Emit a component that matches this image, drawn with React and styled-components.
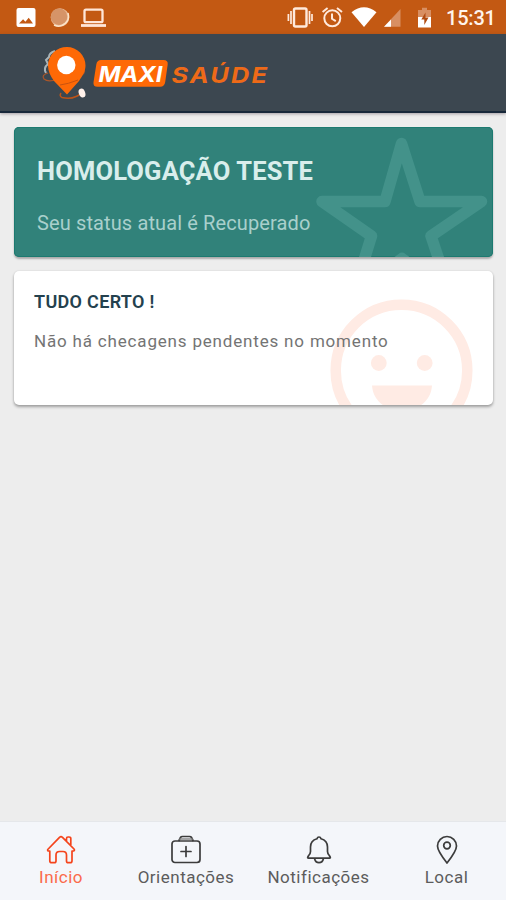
import React from 'react';
import styled, { createGlobalStyle } from 'styled-components';

const GlobalStyle = createGlobalStyle`
  * {
    box-sizing: border-box;
  }

  body {
    margin: 0;
    background-color: #ededed;
    font-family: Roboto, sans-serif;
  }
`;

const Screen = styled.div`
  display: flex;
  flex-direction: column;
  width: 506px;
  height: 900px;
  overflow: hidden;
  background-color: #ededed;
`;

const StatusBar = styled.div`
  display: flex;
  justify-content: space-between;
  height: 34px;
  flex-shrink: 0;
  background-color: #c35913;
`;

const StatusGroup = styled.div`
  display: flex;
  align-items: center;
`;

const Clock = styled.span`
  width: 60px;
  padding: 2px 0 0 0;
  color: #fff4ec;
  font-size: 20px;
  font-weight: 500;
  line-height: 32px;
  letter-spacing: -0.2px;
`;

const Header = styled.header`
  height: 79px;
  flex-shrink: 0;
  padding-left: 38px;
  background-color: #3c4750;
  border-bottom: 2px solid #18283a;
  box-shadow: 0 1px 3px rgba(70, 60, 70, 0.45);
`;

const Content = styled.main`
  display: flex;
  flex-direction: column;
  gap: 14px;
  flex: 1;
  padding: 14px 13px 0 14px;
`;

const Card = styled.section`
  position: relative;
  height: ${(props) => props.$height}px;
  overflow: hidden;
  border-radius: 5px;
  background-color: ${(props) => props.$background};
  box-shadow: 0 2px 3px rgba(0, 0, 0, 0.32), 0 0 2px rgba(0, 0, 0, 0.1);
`;

const StatusCard = styled(Card)`
  padding: 29px 23px 0;
  box-shadow: inset 0 0 0 1px #1c7a70, 0 2px 2px rgba(0, 0, 0, 0.28);
`;

const CheckCard = styled(Card)`
  padding: 20px 20px 0;
`;

const Watermark = styled.svg`
  position: absolute;
  top: 0;
  right: 0;
`;

const UserName = styled.h1`
  position: relative;
  margin: 0;
  color: #d9eeec;
  font-size: 25.5px;
  font-weight: 700;
  line-height: 30px;
  letter-spacing: 0.17px;
`;

const UserStatus = styled.p`
  position: relative;
  margin: 25px 0 0;
  color: #a9d0cc;
  font-size: 20px;
  line-height: 24px;
  letter-spacing: 0.12px;
`;

const CheckTitle = styled.h2`
  position: relative;
  margin: 0;
  color: #24414e;
  font-size: 18px;
  font-weight: 600;
  line-height: 22px;
  letter-spacing: 0.32px;
`;

const CheckText = styled.p`
  position: relative;
  margin: 17px 0 0;
  color: #747474;
  font-size: 17px;
  line-height: 22px;
  letter-spacing: 0.82px;
`;

const TabBar = styled.nav`
  display: grid;
  grid-template-columns: 122px 128px 137px 119px;
  height: 79px;
  flex-shrink: 0;
  border-top: 1px solid #e5e7ea;
  background-color: #f4f6fa;
`;

const Tab = styled.a`
  display: flex;
  flex-direction: column;
  align-items: center;
  padding-top: 13px;
  color: ${(props) => (props.$active ? '#f4441c' : '#3c3c3c')};
`;

const TabLabel = styled.span`
  margin-top: 1px;
  color: ${(props) => (props.$active ? '#fb6b4b' : '#5c5c5c')};
  font-size: 17px;
  line-height: 22px;
  letter-spacing: 0.5px;
`;

const NotificationIcons = () => (
  <svg width="120" height="34" viewBox="0 0 120 34">
    <path
      fill="#fff"
      fillRule="evenodd"
      d="M18.5 8h15a2 2 0 0 1 2 2v15a2 2 0 0 1-2 2h-15a2 2 0 0 1-2-2V10a2 2 0 0 1 2-2zM19 23.500h14l-4.300-5.800-3.300 4.100-2.300-2.600z"
    />
    <circle cx="60" cy="17.500" r="9.300" fill="#e9b894" />
    <circle cx="59" cy="16.700" r="8.300" fill="#d69468" />
    <path d="M54 25a10 10 0 0 0 14-12" fill="none" stroke="#fbe3c8" strokeWidth="1.500" />
    <g fill="none" stroke="#ffe6d8">
      <rect x="84.500" y="9.700" width="18" height="12.500" rx="1.500" strokeWidth="2.300" />
      <path d="M81 25.500h25" strokeWidth="2.800" />
    </g>
  </svg>
);

const SystemIcons = () => (
  <svg width="164" height="34" viewBox="282 0 164 34">
    {/* vibrate */}
    <g fill="none" stroke="#ffe9dc">
      <rect x="294" y="8.500" width="12.500" height="18" rx="1.500" strokeWidth="2.400" />
      <path d="M291 11v13M309.500 11v13M288.400 14v7M312 14v7" strokeWidth="1.700" />
    </g>
    {/* alarm */}
    <g fill="none" stroke="#ffe9dc" strokeWidth="2">
      <circle cx="332.300" cy="18.300" r="8" />
      <path d="M322.600 12l5-4M342 12l-5-4M332 13.500v5.300l3.800 2.400" />
    </g>
    {/* wifi */}
    <path d="M351.500 12.200Q364 2.500 376.500 12.200L364 27z" fill="#fff" />
    {/* signal */}
    <path d="M400.500 9v17.800H384z" fill="#d88f62" />
    <path d="M391 19.500v7.300h-7z" fill="#fff" />
    {/* battery */}
    <path d="M418 10h4V7.700h5V10h4v8h-13z" fill="#d88f62" />
    <path d="M418 17h13v10.500h-13z" fill="#fff" />
    <path d="M425.500 12.500l-4.200 7h3v5.500l4.200-7.500h-3z" fill="#b04b10" />
  </svg>
);

const Logo = () => (
  <svg width="240" height="77" viewBox="38 34 240 77">
    <path
      d="M55 51q-6 2-6 6l-3 3 2 4q-5 4-2 9"
      fill="none"
      stroke="#a9b5b9"
      strokeWidth="2"
    />
    <path
      d="M48 73q-7 2-4 6 5 4 16-1l20-2q6-3 4-7"
      fill="none"
      stroke="#a9562a"
      strokeWidth="1.300"
    />
    <path
      d="M67 47a18.500 18.500 0 0 1 18.500 18.500c0 5.500-3 10.500-6.500 15.500L67 94.500 54 81c-3.600-5-6-10-6-15.500A18.700 18.700 0 0 1 67 47z"
      fill="#fe6906"
    />
    <path d="M60 85q8-1 18-5" fill="none" stroke="#c95310" strokeWidth="1" />
    <path
      d="M61 93q-2 3 1 4.500 8 2 14-1 4-1 5-5"
      fill="none"
      stroke="#bd5418"
      strokeWidth="1.500"
    />
    <circle cx="66.300" cy="65" r="9.200" fill="#fff" />
    <ellipse cx="82" cy="93" rx="3.200" ry="4.600" fill="#fff1ea" transform="rotate(-20 82 93)" />
    <path
      d="M101 60h62.500q4.800 0 4.200 4.500l-2.500 17.500q-.7 4.800-5 4.800H97.500q-4.600 0-4-4.600l2.800-17.700q.7-4.500 4.700-4.500z"
      fill="#fe6906"
    />
    <g fontFamily="Inter, sans-serif" fontStyle="italic" fontSize="22">
      <text x="98.500" y="81.500" fontWeight="700" fill="#fff" textLength="64" lengthAdjust="spacingAndGlyphs">
        MAXI
      </text>
      <text
        transform="translate(171.500 82.500) scale(1.15 1)"
        fontWeight="700"
        fill="#ee6a18"
        textLength="83"
      >
        SAÚDE
      </text>
    </g>
  </svg>
);

const StarWatermark = () => (
  <Watermark width="180" height="130" viewBox="313 127 180 130">
    <path
      d="M401.500 143.500L420 201.500h61.500L431 236l20 60-49-37.500-49 37.500 18.500-60L322 201.500h63z"
      fill="none"
      stroke="#43928a"
      strokeWidth="11.500"
      strokeLinejoin="round"
    />
  </Watermark>
);

const SmileWatermark = () => (
  <Watermark width="180" height="134" viewBox="313 271 180 134" fill="#ffebe4">
    <circle cx="401.500" cy="370.500" r="65.800" fill="none" stroke="#ffebe4" strokeWidth="10.500" />
    <circle cx="378.800" cy="363" r="7.900" />
    <circle cx="424.700" cy="363" r="7.900" />
    <path d="M372 385.500h60c-1 15-13 25-30 25s-29-10-30-25z" />
  </Watermark>
);

const TabIcon = ({ children }) => (
  <svg
    width="30"
    height="30"
    viewBox="0 0 30 30"
    fill="none"
    stroke="currentColor"
    strokeWidth="1.700"
    strokeLinejoin="round"
    strokeLinecap="round"
  >
    {children}
  </svg>
);

const HomeIcon = () => (
  <TabIcon>
    <path d="M3.800 26V16H2.200q-1.200-.8 0-2L13.500 2.300q1.500-1.300 3 0L28 14q1 1.300-.3 2H26v10q0 1.700-2 1.700h-1.700q-1.800 0-1.800-1.700v-6q0-3.500-3.500-3.500h-3.500q-3.500 0-3.500 3.500v6q0 1.700-1.800 1.700H6q-2.200 0-2.200-1.700M20.500 6V3.500q0-1.500 1.500-1.500h1q1.800 0 1.800 1.500V10" />
  </TabIcon>
);

const MedkitIcon = () => (
  <TabIcon>
    <rect x="1" y="6" width="28" height="21.500" rx="3" />
    <path d="M8 5.500l1.500-3q.5-1 2-1h7q1.500 0 2 1l1.500 3M15 11.500v10M10 16.500h10" />
    <path d="M9 4h12" stroke="#888" />
  </TabIcon>
);

const BellIcon = () => (
  <TabIcon>
    <path d="M15 2q-1.500 0-2 1.700C8 5 6.500 8 6.500 12v4.500q0 2-1.800 4L3.800 22q-.5 1.200.7 1.200h21q1.200 0 .7-1.200l-.9-1.500q-1.800-2-1.800-4V12c0-4-1.500-7-6.500-8.300Q16.500 2 15 2zM10.500 23.500q1 4.200 4.500 4.200t4.500-4.200" />
  </TabIcon>
);

const PinIcon = () => (
  <TabIcon>
    <path d="M15 28Q5.500 16 5.500 11a9.500 9.500 0 0 1 19 0Q24.500 16 15 28z" />
    <circle cx="15" cy="10.500" r="3.300" />
  </TabIcon>
);

const tabs = [
  { label: 'Início', icon: HomeIcon, active: true },
  { label: 'Orientações', icon: MedkitIcon },
  { label: 'Notificações', icon: BellIcon },
  { label: 'Local', icon: PinIcon },
];

const App = () => {
  return (
    <Screen>
      <GlobalStyle />
      <StatusBar>
        <StatusGroup>
          <NotificationIcons />
        </StatusGroup>
        <StatusGroup>
          <SystemIcons />
          <Clock>15:31</Clock>
        </StatusGroup>
      </StatusBar>

      <Header>
        <Logo />
      </Header>

      <Content>
        <StatusCard $height={130} $background="#31827a">
          <StarWatermark />
          <UserName>HOMOLOGAÇÃO TESTE</UserName>
          <UserStatus>Seu status atual é Recuperado</UserStatus>
        </StatusCard>

        <CheckCard $height={134} $background="#fff">
          <SmileWatermark />
          <CheckTitle>TUDO CERTO !</CheckTitle>
          <CheckText>Não há checagens pendentes no momento</CheckText>
        </CheckCard>
      </Content>

      <TabBar>
        {tabs.map(({ label, icon: Icon, active }) => (
          <Tab key={label} $active={active}>
            <Icon />
            <TabLabel $active={active}>{label}</TabLabel>
          </Tab>
        ))}
      </TabBar>
    </Screen>
  );
};

export default App;
